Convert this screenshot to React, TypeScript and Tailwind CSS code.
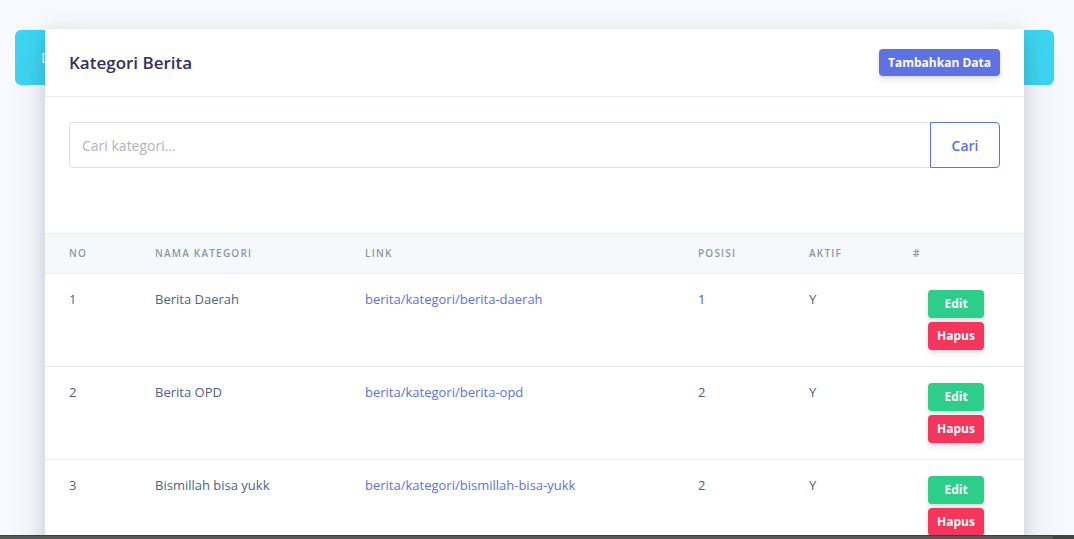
import React from "react";

const rows = [
  { no: 1, nama: "Berita Daerah", link: "berita/kategori/berita-daerah", posisi: 1, aktif: "Y" },
  { no: 2, nama: "Berita OPD", link: "berita/kategori/berita-opd", posisi: 2, aktif: "Y" },
  { no: 3, nama: "Bismillah bisa yukk", link: "berita/kategori/bismillah-bisa-yukk", posisi: 2, aktif: "Y" },
];

export default function App() {
  return (
    <div
      className="relative h-[539px] w-[1074px] overflow-hidden bg-[#f8f9fe]"
      style={{ fontFamily: '"Open Sans", "Noto Sans", sans-serif' }}
    >
      <div className="pl-[15px] pr-[20px] pt-[30px]">
        <div className="flex h-[55px] items-center rounded-[6px] bg-[#3dd5f1] pl-[26px] text-[14px] text-white">
          Data
        </div>
      </div>

      <div className="absolute left-[45px] top-[29px] w-[979px] bg-white shadow-[0_15px_35px_rgba(50,50,93,0.15),0_5px_15px_rgba(0,0,0,0.12)]">
        <div className="flex h-[68px] items-center justify-between border-b border-[#e9ecef] px-6">
          <h3 className="text-[17px] font-semibold text-[#32325d]">Kategori Berita</h3>
          <button className="h-[27px] rounded-[4px] bg-[#5e72e4] px-[9px] text-[12px] font-bold text-white shadow-[0_4px_6px_rgba(50,50,93,0.11),0_1px_3px_rgba(0,0,0,0.08)]">
            Tambahkan Data
          </button>
        </div>

        <div className="px-6 pb-[65px] pt-[25px]">
          <div className="flex h-[46px]">
            <div className="flex flex-1 items-center rounded-l-[4px] border border-r-0 border-[#dee2e6] pl-3 text-[14px] text-[#adb5bd]">
              Cari kategori...
            </div>
            <button className="w-[70px] rounded-r-[4px] border border-[#5e72e4] text-[14px] font-semibold text-[#5e72e4]">
              Cari
            </button>
          </div>
        </div>

        <table className="w-full table-fixed border-collapse">
          <colgroup>
            <col className="w-[86px]" />
            <col className="w-[210px]" />
            <col className="w-[333px]" />
            <col className="w-[111px]" />
            <col className="w-[104px]" />
            <col className="w-[135px]" />
          </colgroup>
          <thead>
            <tr className="h-[40px] border-y border-[#e9ecef] bg-[#f6f9fc] text-left text-[10px] font-semibold uppercase tracking-[1.2px] text-[#8898aa]">
              <th className="px-6 font-semibold">No</th>
              <th className="px-6 font-semibold">Nama Kategori</th>
              <th className="px-6 font-semibold">Link</th>
              <th className="px-6 font-semibold">Posisi</th>
              <th className="px-6 font-semibold">Aktif</th>
              <th className="px-6 font-semibold">#</th>
            </tr>
          </thead>
          <tbody>
            {rows.map((r) => (
              <tr key={r.no} className="border-b border-[#e9ecef] align-top text-[13px] text-[#525f7f]">
                <td className="px-6 pt-[16px]"><div className="leading-[18px]">{r.no}</div></td>
                <td className="px-6 pt-[16px]"><div className="leading-[18px]">{r.nama}</div></td>
                <td className="px-6 pt-[16px]"><div className="leading-[18px] text-[#5e72e4]">{r.link}</div></td>
                <td className="px-6 pt-[16px]"><div className="leading-[18px]">{r.posisi}</div></td>
                <td className="px-6 pt-[16px]"><div className="leading-[18px]">{r.aktif}</div></td>
                <td className="pb-[16px] pl-[39px] pt-[16px]">
                  <div className="flex w-[56px] flex-col gap-[4px]">
                    <button className="h-[28px] w-[56px] rounded-[4px] bg-[#2dce89] text-[12px] font-bold text-white shadow-[0_4px_6px_rgba(50,50,93,0.11),0_1px_3px_rgba(0,0,0,0.08)]">
                      Edit
                    </button>
                    <button className="h-[28px] w-[56px] rounded-[4px] bg-[#f5365c] text-[12px] font-bold text-white shadow-[0_4px_6px_rgba(50,50,93,0.11),0_1px_3px_rgba(0,0,0,0.08)]">
                      Hapus
                    </button>
                  </div>
                </td>
              </tr>
            ))}
          </tbody>
        </table>
      </div>

      <div className="absolute bottom-0 left-0 h-[4px] w-full bg-[#444]">
        <div className="h-full w-[1053px] border-t border-[#3f3f3f] bg-[#585858]" />
      </div>
    </div>
  );
}
